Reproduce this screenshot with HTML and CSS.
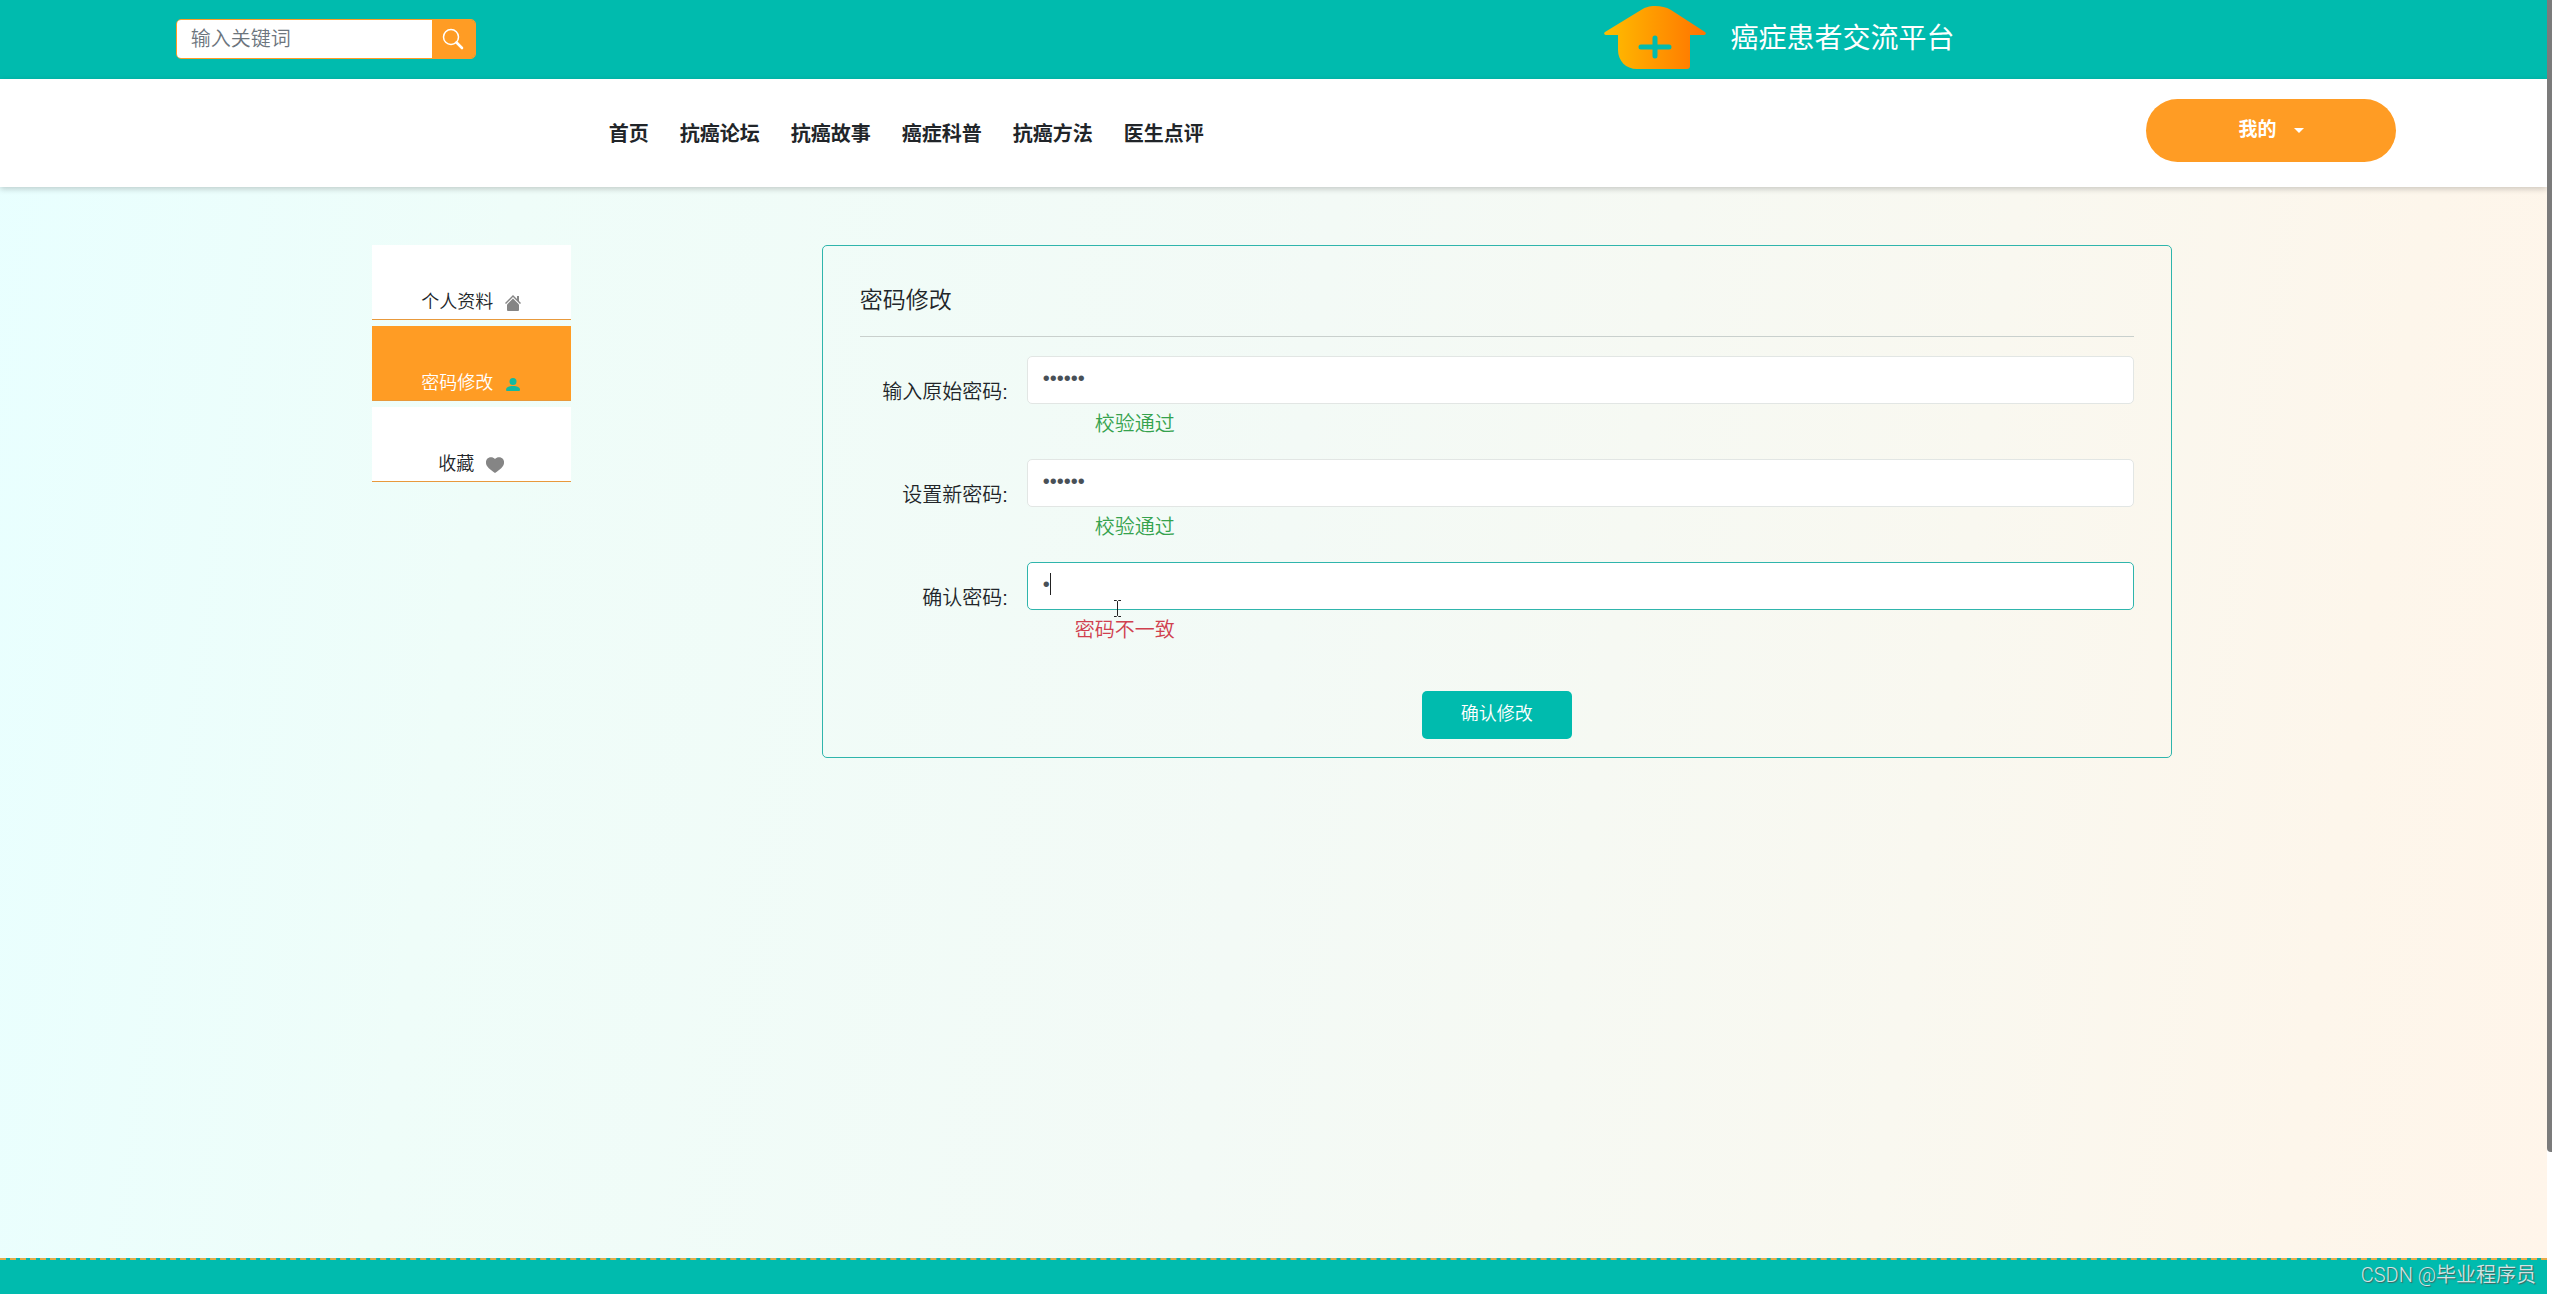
FILE: index.html
```html
<!DOCTYPE html>
<html lang="zh-CN">
<head>
<meta charset="utf-8">
<meta name="viewport" content="width=device-width, initial-scale=1">
<title>癌症患者交流平台</title>
<link rel="stylesheet" href="styles.css">
</head>
<body>
<div class="page">
  <header class="topbar">
    <form class="search" role="search">
      <input class="search-input" type="search" placeholder="输入关键词" aria-label="输入关键词">
      <button class="search-button" type="button" aria-label="搜索">
        <svg width="22" height="22" viewBox="0 0 22 22" fill="none" stroke="currentColor" stroke-linecap="round" aria-hidden="true">
          <circle cx="9" cy="9" r="7.5" stroke-width="1.5"/>
          <path d="M14.5 14.5 20 20" stroke-width="2.6"/>
        </svg>
      </button>
    </form>
    <a class="brand" href="#">
      <svg class="brand-logo" width="102" height="66" viewBox="0 0 102 66" aria-hidden="true">
        <defs>
          <linearGradient id="logo-fill" x1="0" y1="0" x2="1" y2="0">
            <stop offset="0" stop-color="#ffbe00"/>
            <stop offset="1" stop-color="#ff7300"/>
          </linearGradient>
        </defs>
        <path fill="url(#logo-fill)" d="M1 26 37 4C42 1 45 0 51 0s11 1 16 4l34 22c2 2 0 3-2 3H86v31c0 2-1 3-3 3H33c-11 0-19-8-19-19V29H3c-2 0-4-1-2-3Z"/>
        <path d="M51 32v18M37 41h28" fill="none" stroke="#00bbae" stroke-width="5" stroke-linecap="round"/>
      </svg>
      <span>癌症患者交流平台</span>
    </a>
  </header>

  <nav class="navbar">
    <ul class="nav-list">
      <li><a href="#">首页</a></li>
      <li><a href="#">抗癌论坛</a></li>
      <li><a href="#">抗癌故事</a></li>
      <li><a href="#">癌症科普</a></li>
      <li><a href="#">抗癌方法</a></li>
      <li><a href="#">医生点评</a></li>
    </ul>
    <button class="mine-button" type="button">我的 <span class="caret"></span></button>
  </nav>

  <main class="content">
    <aside class="side-menu">
      <a class="side-item" href="#">个人资料
        <svg width="16" height="18" viewBox="0 0 16 18" fill="#858585" aria-hidden="true">
          <path d="M8 1 0 9l1 1 7-7 7 7 1-1-2-2V2h-2v3Z"/>
          <path d="M8 4.500 2 10.500V16q0 1 1 1h10q1 0 1-1v-5.500Z"/>
        </svg>
      </a>
      <a class="side-item active" href="#" aria-current="page">密码修改
        <svg width="16" height="18" viewBox="0 0 16 18" fill="#12b9a0" aria-hidden="true">
          <circle cx="8" cy="6.500" r="3.500"/>
          <path d="M2 16c-1 0-1-1-1-1 0-3 3-4 7-4s7 1 7 4c0 0 0 1-1 1Z"/>
        </svg>
      </a>
      <a class="side-item" href="#">收藏
        <svg width="18" height="18" viewBox="0 0 18 18" fill="#858585" aria-hidden="true">
          <path d="M9 3C7 .500 3 .500 1 3-.500 5-.300 8 1 10c2 3 6 5.500 8 7 2-1.500 6-4 8-7 1.300-2 1.500-5 0-7-2-2.500-6-2.500-8 0Z"/>
        </svg>
      </a>
    </aside>

    <form class="card">
      <h1 class="card-title">密码修改</h1>
      <div class="fields">
        <div class="field">
          <label for="old-password">输入原始密码:</label>
          <div class="control">
            <input id="old-password" type="password" value="123456">
            <p class="hint ok">校验通过</p>
          </div>
        </div>
        <div class="field">
          <label for="new-password">设置新密码:</label>
          <div class="control">
            <input id="new-password" type="password" value="123456">
            <p class="hint ok">校验通过</p>
          </div>
        </div>
        <div class="field">
          <label for="confirm-password">确认密码:</label>
          <div class="control">
            <input id="confirm-password" class="focused" type="password" value="1">
            <p class="hint error">密码不一致</p>
            <span class="text-caret"></span>
            <svg class="pointer" width="9" height="17" viewBox="0 0 9 17" fill="none" stroke="#222" aria-hidden="true">
              <path d="M1 .500h2.500l1 1 1-1H8M4.500 1.500v14M1 16.500h2.500l1-1 1 1H8"/>
            </svg>
          </div>
        </div>
      </div>
      <button class="submit" type="button">确认修改</button>
    </form>
  </main>

  <footer class="footer">CSDN @毕业程序员</footer>
</div>
<div class="scroll-track"><div class="scroll-thumb"></div></div>
</body>
</html>
```
FILE: styles.css
```css
* {
  box-sizing: border-box;
}

body {
  margin: 0;
  overflow: hidden;
  background: #fff;
  color: #212529;
  font: 350 20px/30px "Liberation Sans", "Noto Sans CJK SC", sans-serif;
}

a {
  color: inherit;
  text-decoration: none;
}

button,
input {
  font: inherit;
}

.page {
  display: flex;
  flex-direction: column;
  min-height: 100vh;
  margin-right: 5px;
  background: linear-gradient(98deg, #e8ffff 0%, #effdf9 20%, #f3faf6 50%, #f9f8f0 75%, #fdf6eb 90%, #fff5ea 100%);
}

/* Top bar */
.topbar {
  display: flex;
  align-items: center;
  height: 79px;
  padding: 0 0 2px 6.9%;
  background: #00bbae;
}

.search {
  display: flex;
  width: 300px;
  height: 40px;
  border: 1px solid #ff9c24;
  border-radius: 5px;
  overflow: hidden;
}

.search-input {
  flex: 1;
  min-width: 0;
  padding: 0 14px;
  border: 0;
  outline: 0;
  background: #fff;
}

.search-input::placeholder {
  color: #6c757d;
  opacity: 1;
}

.search-button {
  display: flex;
  align-items: center;
  justify-content: center;
  width: 43px;
  padding: 0;
  border: 0;
  background: #ff9c24;
  color: #fff;
}

.brand {
  display: flex;
  align-items: center;
  gap: 24px;
  margin-left: 47.6%;
  color: #fff;
  font-size: 28px;
  font-weight: 400;
}

/* Navigation */
.navbar {
  display: flex;
  align-items: center;
  justify-content: space-between;
  height: 108px;
  padding: 0 151px 6px 23.9%;
  background: #fff;
  box-shadow: 0 2px 6px rgba(0, 0, 0, 0.2);
}

.nav-list {
  display: flex;
  gap: 31px;
  margin: 0;
  padding: 8px 0 0;
  list-style: none;
  font-weight: 700;
}

.mine-button {
  display: flex;
  align-items: center;
  justify-content: center;
  gap: 17px;
  width: 250px;
  height: 63px;
  border: 0;
  border-radius: 32px;
  background: #ff9c24;
  color: #fff;
  font-size: 19px;
  font-weight: 700;
}

.caret {
  border: 5px solid transparent;
  border-top-color: #fff;
  border-bottom: 0;
}

/* Content */
.content {
  display: flex;
  flex: 1;
  align-items: flex-start;
  padding: 58px 14.7% 0 14.6%;
}

.side-menu {
  display: flex;
  flex-direction: column;
  gap: 6px;
  width: 199px;
}

.side-item {
  display: flex;
  align-items: flex-end;
  justify-content: center;
  gap: 12px;
  height: 75px;
  padding-bottom: 7px;
  border-bottom: 1px solid #e8993c;
  background: #fff;
  font-size: 18px;
  line-height: 20px;
}

.side-item.active {
  background: #ff9c24;
  color: #fff;
}

.card {
  flex: 1;
  max-width: 1350px;
  margin-left: 251px;
  padding: 37px 37px 18px;
  border: 1px solid #2fb5ac;
  border-radius: 5px;
}

.card-title {
  margin: 0;
  padding-bottom: 19px;
  border-bottom: 1px solid #c9d0cd;
  font-size: 23px;
  font-weight: inherit;
  line-height: 34px;
}

.fields {
  display: flex;
  flex-direction: column;
  gap: 15px;
  padding-top: 19px;
}

.field {
  display: grid;
  grid-template-columns: 148px 1fr;
  column-gap: 19px;
}

.field label {
  padding-top: 21px;
  text-align: right;
}

.control {
  position: relative;
}

.control input {
  display: block;
  width: 100%;
  height: 48px;
  padding: 0 15px 4px;
  border: 1px solid #e2e6e4;
  border-radius: 5px;
  outline: 0;
  background: #fff;
  color: #495057;
}

.control input.focused {
  border-color: #2fb5ac;
}

.hint {
  width: 148px;
  margin: 0;
  line-height: 40px;
  text-align: right;
}

.hint.ok {
  color: #35a24d;
}

.hint.error {
  color: #d0404e;
}

.text-caret {
  position: absolute;
  top: 11px;
  left: 23px;
  width: 1px;
  height: 22px;
  background: #222;
}

.pointer {
  position: absolute;
  top: 38px;
  left: 86px;
}

.submit {
  display: block;
  width: 150px;
  height: 48px;
  margin: 41px auto 0;
  padding: 0 0 2px;
  border: 0;
  border-radius: 5px;
  background: #00bbae;
  color: #fff;
  font-size: 18px;
}

/* Footer */
.footer {
  height: 36px;
  padding-right: 11px;
  border-top: 2px dashed #e5ac4a;
  background: #00bbae;
  color: #cfe5e2;
  font-family: Roboto, "Noto Sans CJK SC", sans-serif;
  text-align: right;
  text-shadow: 1px 1px 1px #45605e;
}

/* Scroll indicator along the right edge */
.scroll-track {
  position: fixed;
  top: 0;
  right: 0;
  width: 5px;
  height: 100%;
  background: #fff;
}

.scroll-thumb {
  height: 89%;
  border-radius: 0 0 0 4px;
  background: #7b7b7b;
}
```
